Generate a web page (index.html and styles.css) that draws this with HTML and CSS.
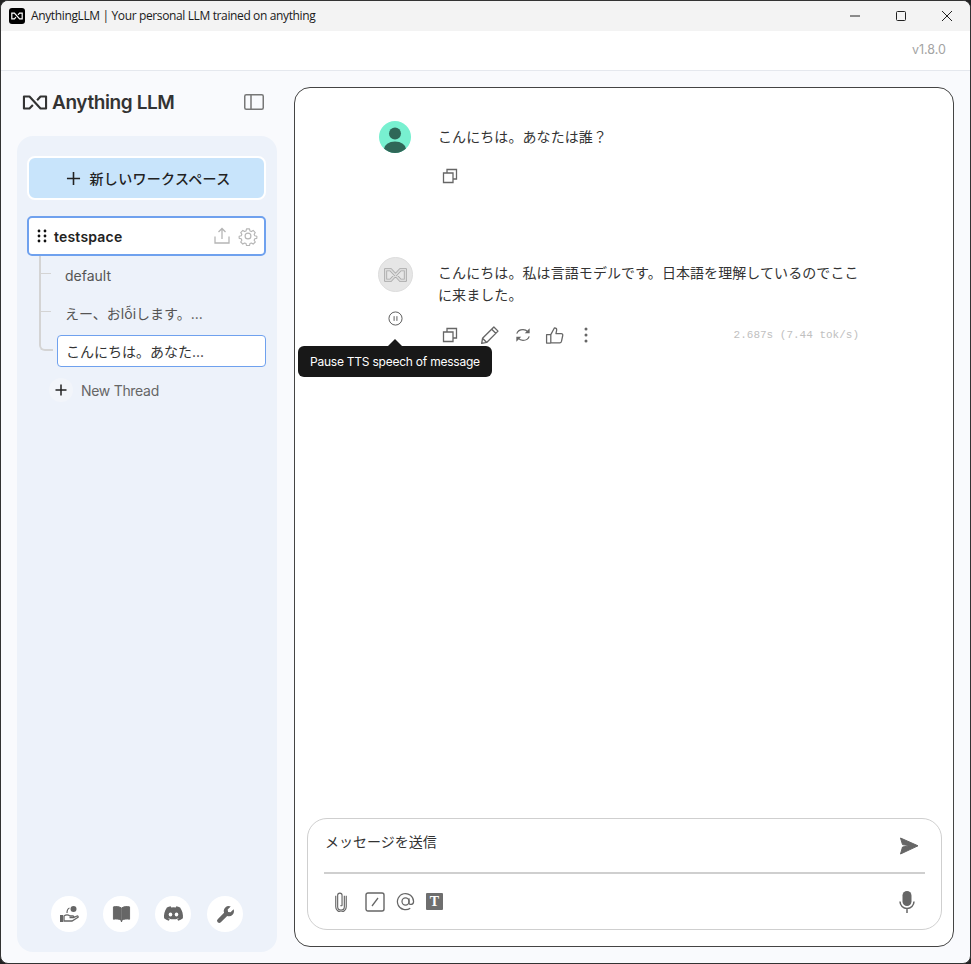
FILE: index.html
```html
<!DOCTYPE html>
<html lang="ja">
<head>
<meta charset="utf-8">
<title>AnythingLLM</title>
<link rel="stylesheet" href="styles.css">
</head>
<body>
<div class="window">
  <header class="titlebar">
    <span class="app-icon"><svg viewBox="0 0 30 20" width="12" height="8"><path d="M12.500 13L8.500 17H2V3h6.500l13 14H28V3h-6.500l-4 4.300" fill="none" stroke="#fff" stroke-width="3"/></svg></span>
    <span class="app-title">AnythingLLM | Your personal LLM trained on anything</span>
    <div class="win-controls">
      <svg class="win-btn" viewBox="0 0 12 12"><path d="M1 6h10" stroke="#222" stroke-width="1"/></svg>
      <svg class="win-btn" viewBox="0 0 12 12"><rect x="1.500" y="1.500" width="9" height="9" rx="1" fill="none" stroke="#222"/></svg>
      <svg class="win-btn" viewBox="0 0 12 12"><path d="M1 1l10 10M11 1L1 11" stroke="#222" stroke-width="1"/></svg>
    </div>
  </header>
  <div class="versionbar"><span>v1.8.0</span></div>
  <main class="main">
    <aside class="left">
      <div class="brand">
        <div class="logo">
          <svg viewBox="0 0 30 20" width="26" height="17"><path d="M12.500 13L8.500 17H2V3h6.500l13 14H28V3h-6.500l-4 4.300" fill="none" stroke="#333" stroke-width="2.500" stroke-linejoin="round"/></svg>
          <span>Anything LLM</span>
        </div>
        <svg class="panel-toggle" viewBox="0 0 20 16"><rect x="0.750" y="0.750" width="18.500" height="14.500" rx="1.500" fill="none" stroke="#777" stroke-width="1.500"/><path d="M7 1v14" stroke="#777" stroke-width="1.500"/></svg>
      </div>
      <nav class="panel">
        <button class="new-ws"><svg viewBox="0 0 16 16" width="15" height="15"><path d="M8 1v14M1 8h14" stroke="#222" stroke-width="1.700"/></svg><span>新しいワークスペース</span></button>
        <div class="ws-item">
          <svg class="grip" viewBox="0 0 10 14" width="10" height="14"><g fill="#111"><circle cx="2" cy="2" r="1.400"/><circle cx="8" cy="2" r="1.400"/><circle cx="2" cy="7" r="1.400"/><circle cx="8" cy="7" r="1.400"/><circle cx="2" cy="12" r="1.400"/><circle cx="8" cy="12" r="1.400"/></g></svg>
          <span class="ws-name">testspace</span>
          <svg viewBox="0 0 18 18" width="18" height="18"><path d="M9 12V2M5.500 5L9 1.500 12.500 5M2 9.500V16h14V9.500" fill="none" stroke="#b5b5b5" stroke-width="1.300"/></svg>
          <svg class="gear" viewBox="0 0 24 24" width="20" height="20"><path d="M10 2.500h4l.6 2.800 1.900.8 2.400-1.500 2.800 2.800-1.500 2.400.8 1.900 2.800.6v2.800l-2.800.6-.8 1.900 1.500 2.400-2.800 2.800-2.400-1.500-1.900.8-.6 2.800h-4l-.6-2.800-1.900-.8-2.400 1.500-2.800-2.800 1.500-2.400-.8-1.900-2.800-.6v-2.800l2.800-.6.8-1.900-1.500-2.400 2.800-2.800 2.400 1.500 1.900-.8z" transform="translate(1.200 1.200) scale(.9)" fill="none" stroke="#b5b5b5" stroke-width="1.500" stroke-linejoin="round"/><circle cx="12" cy="12" r="3.500" fill="none" stroke="#b5b5b5" stroke-width="1.400"/></svg>
        </div>
        <div class="threads">
          <span class="tree-line"></span>
          <div class="thread"><span class="branch"></span><span class="thread-label">default</span></div>
          <div class="thread"><span class="branch"></span><span class="thread-label">えー、おlỗiします。...</span></div>
          <div class="thread active"><span class="branch-end"></span><span class="thread-label">こんにちは。あなた...</span></div>
          <div class="new-thread"><span class="plus-circle"><svg viewBox="0 0 12 12" width="12" height="12"><path d="M6 .5v11M.5 6h11" stroke="#222" stroke-width="1.500"/></svg></span><span>New Thread</span></div>
        </div>
        <div class="footer-icons">
          <span class="round"><svg viewBox="0 0 20 18" width="20" height="18"><circle cx="14.500" cy="4" r="3" fill="#666"/><path d="M1 10h3v7H1z" fill="#666"/><path d="M5 11c2-1.500 4-1.500 6 0h3c1 0 1 1.700 0 1.700h-3.500 4l3.500-1.700c1-.3 1.600 1 .7 1.500L13 16H5z" fill="none" stroke="#666" stroke-width="1.300"/><path d="M8 8c0-2.500 1-4.500 2.500-5" fill="none" stroke="#666" stroke-width="1.200"/></svg></span>
          <span class="round"><svg viewBox="0 0 20 18" width="19" height="18"><path d="M1.500 1.500c3-.7 6-.3 8.100 1V15.500c-2.200-1.300-5-1.600-8.100-1zM18.500 1.500c-3-.7-6-.3-8.100 1V15.500c2.200-1.300 5-1.600 8.100-1z" fill="#666" stroke="#666"/><path d="M10 15v2.500" stroke="#666" stroke-width="1.300"/></svg></span>
          <span class="round"><svg viewBox="0 0 22 17" width="21" height="16"><path d="M18 1.500A17 17 0 0 0 14 .3l-.6 1.200a15 15 0 0 0-4.800 0L8 .3a17 17 0 0 0-4 1.200C1.300 5.400.6 9.300 1 13.100A17 17 0 0 0 6 15.700l1-1.700-1.600-.8.400-.3a12 12 0 0 0 10.400 0l.4.300-1.600.8 1 1.700a17 17 0 0 0 5-2.600c.5-4.400-.7-8.200-3-11.600z" fill="#666"/><ellipse cx="7.800" cy="9" rx="1.900" ry="2.100" fill="#fff"/><ellipse cx="14.200" cy="9" rx="1.900" ry="2.100" fill="#fff"/></svg></span>
          <span class="round"><svg viewBox="0 0 20 20" width="19" height="19"><path d="M18.500 4.500l-3.200 3.200-2.600-.4-.4-2.600L15.500 1.500a5.300 5.300 0 0 0-7 6.700L1.800 14.900a2.300 2.300 0 0 0 3.300 3.300l6.700-6.700a5.300 5.300 0 0 0 6.700-7z" fill="#666"/></svg></span>
        </div>
      </nav>
    </aside>
    <section class="chat">
      <div class="history">
        <article class="msg user">
          <div class="avatar-col"><svg class="avatar" viewBox="0 0 32 32" width="32" height="32"><defs><clipPath id="ac"><circle cx="16" cy="16" r="16"/></clipPath></defs><circle cx="16" cy="16" r="16" fill="#78f0d0"/><g clip-path="url(#ac)" fill="#2f6758"><circle cx="16" cy="12.500" r="6"/><ellipse cx="16" cy="28" rx="11" ry="7.500"/></g></svg></div>
          <div class="msg-body">
            <p>こんにちは。あなたは誰？</p>
            <div class="actions"><svg class="copy" viewBox="0 0 16 16" width="16" height="16"><path d="M5 5V1.500h9.500V11H11M1.500 5H11v9.500H1.500z" fill="none" stroke="#666" stroke-width="1.300"/></svg></div>
          </div>
        </article>
        <article class="msg bot">
          <div class="avatar-col">
            <span class="bot-avatar"><svg viewBox="0 0 30 20" width="23" height="16"><path d="M2 3v14h6.500L21.500 3H28v14h-6.500L8.500 3z" fill="none" stroke="#a8a8a8" stroke-width="4.200" stroke-linejoin="round"/><path d="M2 3v14h6.500L21.500 3H28v14h-6.500L8.500 3z" fill="none" stroke="#dcdcdc" stroke-width="2" stroke-linejoin="round"/></svg></span>
            <svg class="pause" viewBox="0 0 16 16" width="15" height="15"><circle cx="8" cy="8" r="7" fill="none" stroke="#555" stroke-width="1"/><path d="M6.500 5.500v5M9.500 5.500v5" stroke="#555" stroke-width="1"/></svg>
          </div>
          <div class="msg-body">
            <p>こんにちは。私は言語モデルです。日本語を理解しているのでここに来ました。</p>
            <div class="actions bot-actions">
              <svg class="copy" viewBox="0 0 16 16" width="16" height="16"><path d="M5 5V1.500h9.500V11H11M1.500 5H11v9.500H1.500z" fill="none" stroke="#666" stroke-width="1.300"/></svg>
              <svg class="act-edit" viewBox="0 0 18 18" width="20" height="20"><path d="M12.500 1.800l3.700 3.700L6 15.700 1.500 16.500l.8-4.500zM10.500 3.800l3.700 3.700M2.300 12l3.700 3.700" fill="none" stroke="#666" stroke-width="1.200" stroke-linejoin="round"/></svg>
              <svg class="act-regen" viewBox="0 0 18 18" width="16" height="16"><path d="M2 7.500C3 4.500 6 3 9 3c2 0 4 .8 5.500 2.500M16 10.500C15 13.500 12 15 9 15c-2 0-4-.8-5.500-2.500" fill="none" stroke="#666" stroke-width="1.300"/><path d="M16.500 1.500V7h-5.500zM1.500 16.500V11H7z" fill="#666"/></svg>
              <svg class="act-thumb" viewBox="0 0 18 18" width="19" height="19"><path d="M5.500 8.200L9 1.700c1.500 0 2.300 1 2 2.500l-.6 3h5c1 0 1.600.9 1.400 1.800l-1.200 5.600c-.2.800-.8 1.400-1.600 1.400H5.500zM5.500 8.200H1.500v8h4" fill="none" stroke="#666" stroke-width="1.200" stroke-linejoin="round"/></svg>
              <svg class="act-more" viewBox="0 0 4 16" width="4" height="16"><g fill="#666"><circle cx="2" cy="2" r="1.500"/><circle cx="2" cy="8" r="1.500"/><circle cx="2" cy="14" r="1.500"/></g></svg>
              <span class="stats">2.687s (7.44 tok/s)</span>
            </div>
          </div>
          <div class="tooltip">Pause TTS speech of message</div>
        </article>
      </div>
      <div class="composer">
        <div class="input-row">
          <span>メッセージを送信</span>
          <svg viewBox="0 0 20 18" width="20" height="18"><path d="M1.500 1L19 8.800 1.500 17 3.500 10 11 8.800 3.500 7.600z" fill="#666" stroke="#666" stroke-width="1" stroke-linejoin="round"/></svg>
        </div>
        <div class="tool-row">
          <div class="tools">
            <svg class="clip" viewBox="0 0 14 22" width="14" height="21"><path d="M10.500 5v11.500a3.500 3.500 0 0 1-7 0V4.500a2.300 2.300 0 0 1 4.600 0V15a1 1 0 0 1-1.600 0" fill="none" stroke="#666" stroke-width="1.200"/><path d="M12.500 5v11.500a5.500 5.500 0 0 1-11 0V5" fill="none" stroke="#666" stroke-width="1.200"/></svg>
            <svg class="slash" viewBox="0 0 20 20" width="20" height="20"><rect x="1" y="1" width="18" height="18" rx="2" fill="none" stroke="#666" stroke-width="1.400"/><path d="M7 14l6-8" stroke="#666" stroke-width="1.300"/></svg>
            <svg class="at" viewBox="0 0 20 20" width="19" height="19"><circle cx="10" cy="10" r="3.700" fill="none" stroke="#666" stroke-width="1.300"/><path d="M13.700 6.500v5c0 2.400 4.800 2.400 4.800-1.500A8.500 8.500 0 1 0 15 17" fill="none" stroke="#666" stroke-width="1.300"/></svg>
            <span class="t-box">T</span>
          </div>
          <svg viewBox="0 0 16 22" width="16" height="22"><rect x="3.500" y="0" width="9" height="15" rx="4.500" fill="#666"/><path d="M1 10.500a7 7 0 0 0 14 0M8 17.500V22" fill="none" stroke="#666" stroke-width="1.500"/></svg>
        </div>
      </div>
    </section>
  </main>
</div>
</body>
</html>
```
FILE: styles.css
```css
* { box-sizing: border-box; }
html, body { margin: 0; height: 100%; background: #222; overflow: hidden; }
body { font-family: "Inter", "Noto Sans CJK JP", sans-serif; color: #222; }

.window {
  width: 971px; height: 964px;
  border: 1px solid #333; border-radius: 8px;
  background: #f9fafd;
  display: flex; flex-direction: column;
  overflow: hidden;
}

.titlebar {
  height: 30px; flex: none; background: #f3f3f3;
  display: flex; align-items: center; padding-left: 8px;
}
.app-icon {
  width: 16px; height: 16px; background: #000; border-radius: 3px;
  display: flex; align-items: center; justify-content: center;
}
.app-title {
  margin-left: 6px; font: 12px/16px "Open Sans", sans-serif; color: #1a1a1a;
  letter-spacing: -.37px; white-space: nowrap;
}
.win-controls { margin-left: auto; display: flex; align-items: center; gap: 34px; padding-right: 17px; }
.win-btn { width: 12px; height: 12px; }

.versionbar {
  height: 40px; flex: none; background: #fff; border-bottom: 1px solid #e5e8ee;
  display: flex; align-items: center; justify-content: flex-end;
  padding: 0 24px 2px 0;
  font-size: 12.5px; color: #a3a3a3;
}

.main { flex: 1; min-height: 0; display: flex; padding: 16px; }

.left { width: 260px; flex: none; display: flex; flex-direction: column; margin-bottom: -5px; }
.brand { height: 49px; flex: none; display: flex; align-items: flex-start; justify-content: space-between; padding: 0 13px 0 5px; }
.logo { display: flex; align-items: center; gap: 4px; height: 30px; font-size: 19px; font-weight: 600; color: #333; letter-spacing: -.4px; white-space: nowrap; }
.panel-toggle { width: 20px; height: 16px; margin-top: 7px; }

.panel {
  flex: 1; min-height: 0; background: #edf2fa; border-radius: 16px;
  display: flex; flex-direction: column; padding: 20px 11px 20px 10px;
}
.new-ws {
  height: 44px; flex: none; background: #c8e4fb; border: 2px solid #fff; border-radius: 8px;
  display: flex; align-items: center; justify-content: center; gap: 9px;
  font: 500 14px "Inter", "Noto Sans CJK JP", sans-serif; letter-spacing: .3px; color: #222; padding: 0 0 0 3px;
}
.ws-item {
  margin-top: 16px; height: 40px; flex: none; background: #fff;
  border: 2px solid #6fa1ee; border-radius: 5px;
  display: flex; align-items: center; padding: 0 6px 0 8px;
}
.grip { margin-right: 7px; }
.ws-name { font-size: 14px; font-weight: 600; color: #222; letter-spacing: .2px; margin-right: auto; }
.gear { margin-left: 7px; }

.threads { position: relative; padding-left: 30px; display: flex; flex-direction: column; }
.tree-line {
  position: absolute; left: 12px; top: 0; width: 2px; height: 86px;
  background: #d4d4d4;
}
.thread { position: relative; height: 38px; display: flex; align-items: center; font-size: 14px; color: #555; white-space: nowrap; }
.thread-label { padding-left: 8px; }
.branch { position: absolute; left: -18px; top: 17px; width: 12px; height: 1px; background: #d4d4d4; }
.branch-end {
  position: absolute; left: -19px; top: -1px; width: 14px; height: 16px;
  border-left: 2px solid #d4d4d4; border-bottom: 2px solid #d4d4d4;
  border-radius: 0 0 0 6px;
}
.thread.active {
  height: 32px; margin-top: 3px; background: #fff; border: 1px solid #6fa1ee; border-radius: 4px; color: #333;
}
.new-thread { display: flex; align-items: center; height: 40px; margin-top: 3px; margin-left: -8px; gap: 8px; font-size: 14px; color: #666; letter-spacing: -.3px; }
.plus-circle { width: 24px; height: 24px; border-radius: 50%; background: #f2f5fa; display: flex; align-items: center; justify-content: center; }

.footer-icons { margin-top: auto; display: flex; justify-content: center; gap: 16px; padding-left: 1px; }
.round { width: 36px; height: 36px; background: #fff; border-radius: 50%; display: flex; align-items: center; justify-content: center; }

.chat {
  flex: 1; min-width: 0; margin-left: 17px; background: #fff;
  border: 1px solid #444; border-radius: 16px;
  display: flex; flex-direction: column; position: relative;
}
.history { flex: 1; min-height: 0; padding: 33px 94px 0 83px; }
.msg { display: flex; position: relative; }
.msg p { margin: 0 -4px 0 0; font-size: 14px; line-height: 22px; letter-spacing: .08px; color: #333; }
.msg.bot { margin-top: 72px; }
.avatar-col { flex: none; display: flex; flex-direction: column; align-items: center; width: 34px; margin-right: 26px; }
.avatar { display: block; }
.msg-body { flex: 1; padding-top: 5px; min-width: 0; }
.actions { display: flex; align-items: center; margin-top: 19px; padding-left: 4px; height: 18px; }
.bot-actions { margin-top: 20px; }
.act-edit { margin-left: 22px; }
.act-regen { margin-left: 15px; }
.act-thumb { margin-left: 14px; }
.act-more { margin-left: 20px; }
.stats { margin-left: auto; font: 11px "Liberation Mono", monospace; color: #c0c0c0; }
.bot-avatar {
  flex: none; width: 35px; height: 35px; border-radius: 50%; background: #e6e6e6; border: 1px solid #ddd;
  display: flex; align-items: center; justify-content: center;
}
.pause { margin-top: 19px; }

.tooltip {
  position: absolute; left: -80px; top: 89px; height: 31px; padding: 0 12px;
  background: #181818; color: #fff; border-radius: 6px;
  font-size: 12px; line-height: 31px; letter-spacing: -.23px; white-space: nowrap;
}
.tooltip::before {
  content: ""; position: absolute; left: 90px; top: -7px;
  border-left: 7px solid transparent; border-right: 7px solid transparent; border-bottom: 7px solid #181818;
}

.composer {
  flex: none; margin: 0 11px 16px 12px; height: 112px;
  border: 1px solid #cfcfcf; border-radius: 20px; padding: 0 16px;
  display: flex; flex-direction: column;
}
.input-row {
  height: 55px; flex: none; border-bottom: 2px solid #cfcfcf;
  display: flex; justify-content: space-between; align-items: flex-start;
  padding: 13px 6px 0 1px; font-size: 14px; line-height: 20px; color: #333;
}
.input-row svg { margin-top: 5px; }
.tool-row { flex: 1; display: flex; align-items: center; justify-content: space-between; padding: 0 10px; }
.tools { display: flex; align-items: center; }
.slash { margin-left: 17px; }
.at { margin-left: 11px; }
.t-box {
  margin-left: 11px; width: 17px; height: 17px; background: #6e6e6e; color: #fff; border-radius: 1px;
  font: 700 14px/17px "Liberation Serif", serif; text-align: center;
}
```
